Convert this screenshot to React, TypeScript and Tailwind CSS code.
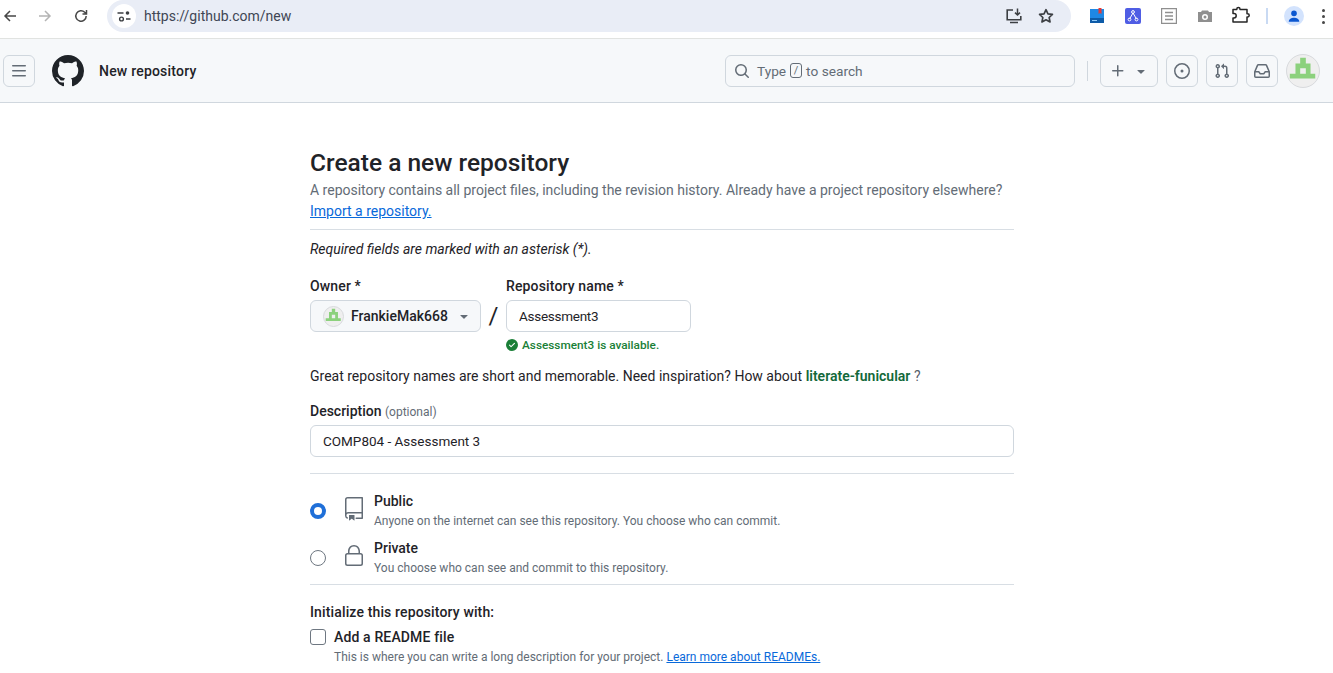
const octicons = {
  bars: "M1 2.75A.75.75 0 0 1 1.75 2h12.5a.75.75 0 0 1 0 1.5H1.75A.75.75 0 0 1 1 2.75Zm0 5A.75.75 0 0 1 1.75 7h12.5a.75.75 0 0 1 0 1.5H1.75A.75.75 0 0 1 1 7.75ZM1.75 12h12.5a.75.75 0 0 1 0 1.5H1.75a.75.75 0 0 1 0-1.5Z",
  github: "M8 0c4.42 0 8 3.58 8 8a8.013 8.013 0 0 1-5.45 7.59c-.4.08-.55-.17-.55-.38 0-.27.01-1.13.01-2.2 0-.75-.25-1.23-.54-1.48 1.78-.2 3.65-.88 3.65-3.95 0-.88-.31-1.59-.82-2.15.08-.2.36-1.02-.08-2.12 0 0-.67-.22-2.2.82-.64-.18-1.32-.27-2-.27-.68 0-1.36.09-2 .27-1.53-1.03-2.2-.82-2.2-.82-.44 1.1-.16 1.92-.08 2.12-.51.56-.82 1.28-.82 2.15 0 3.06 1.86 3.75 3.64 3.95-.23.2-.44.55-.51 1.07-.46.21-1.61.55-2.33-.66-.15-.24-.6-.83-1.23-.82-.67.01-.27.38.01.53.34.19.73.9.82 1.13.16.45.68 1.31 2.69.94 0 .67.01 1.3.01 1.49 0 .21-.15.45-.55.38A7.995 7.995 0 0 1 0 8c0-4.42 3.58-8 8-8Z",
  search: "M10.68 11.74a6 6 0 0 1-7.922-8.982 6 6 0 0 1 8.982 7.922l3.04 3.04a.749.749 0 0 1-.326 1.275.749.749 0 0 1-.734-.215ZM11.5 7a4.499 4.499 0 1 0-8.997 0A4.499 4.499 0 0 0 11.5 7Z",
  plus: "M7.75 2a.75.75 0 0 1 .75.75V7h4.25a.75.75 0 0 1 0 1.5H8.5v4.25a.75.75 0 0 1-1.5 0V8.5H2.75a.75.75 0 0 1 0-1.5H7V2.75A.75.75 0 0 1 7.75 2Z",
  caret: "m4.427 7.427 3.396 3.396a.25.25 0 0 0 .354 0l3.396-3.396A.25.25 0 0 0 11.396 7H4.604a.25.25 0 0 0-.177.427Z",
  issue: "M8 9.5a1.5 1.5 0 1 0 0-3 1.5 1.5 0 0 0 0 3ZM8 0a8 8 0 1 1 0 16A8 8 0 0 1 8 0ZM1.5 8a6.5 6.5 0 1 0 13 0 6.5 6.5 0 0 0-13 0Z",
  pull: "M1.5 3.25a2.25 2.25 0 1 1 3 2.122v5.256a2.251 2.251 0 1 1-1.5 0V5.372A2.25 2.25 0 0 1 1.5 3.25Zm5.677-.177L9.573.677A.25.25 0 0 1 10 .854V2.5h1A2.5 2.5 0 0 1 13.5 5v5.628a2.251 2.251 0 1 1-1.5 0V5a1 1 0 0 0-1-1h-1v1.646a.25.25 0 0 1-.427.177L7.177 3.427a.25.25 0 0 1 0-.354ZM3.75 2.5a.75.75 0 1 0 0 1.5.75.75 0 0 0 0-1.5Zm0 9.5a.75.75 0 1 0 0 1.5.75.75 0 0 0 0-1.5Zm8.25.75a.75.75 0 1 0 1.5 0 .75.75 0 0 0-1.5 0Z",
  inbox: "M2.8 2.06A1.75 1.75 0 0 1 4.41 1h7.18c.7 0 1.333.417 1.61 1.06l2.74 6.395c.04.093.06.194.06.295v4.5A1.75 1.75 0 0 1 14.25 15H1.75A1.75 1.75 0 0 1 0 13.25v-4.5c0-.101.02-.202.06-.295Zm1.61.44a.25.25 0 0 0-.23.152L1.887 8H4.75a.75.75 0 0 1 .6.3L6.625 10h2.75l1.275-1.7a.75.75 0 0 1 .6-.3h2.863L11.82 2.652a.25.25 0 0 0-.23-.152Zm10.09 7h-2.875l-1.275 1.7a.75.75 0 0 1-.6.3h-3.5a.75.75 0 0 1-.6-.3L4.375 9.5H1.5v3.75c0 .138.112.25.25.25h12.5a.25.25 0 0 0 .25-.25Z",
  check: "M8 16A8 8 0 1 1 8 0a8 8 0 0 1 0 16Zm3.78-9.72a.751.751 0 0 0-.018-1.042.751.751 0 0 0-1.042-.018L6.75 9.19 5.28 7.72a.751.751 0 0 0-1.042.018.751.751 0 0 0-.018 1.042l2 2a.75.75 0 0 0 1.06 0Z",
};

// these two come from the 24px octicon set, thinner strokes than the 16px ones
const repo24 = "M3 2.75A2.75 2.75 0 0 1 5.75 0h14.5a.75.75 0 0 1 .75.75v20.5a.75.75 0 0 1-.75.75h-6a.75.75 0 0 1 0-1.5h5.25v-4H6A1.5 1.5 0 0 0 4.5 18v.75c0 .716.43 1.334 1.05 1.605a.75.75 0 0 1-.6 1.374A3.251 3.251 0 0 1 3 18.75ZM19.5 1.5H5.75c-.69 0-1.25.56-1.25 1.25v12.651A2.989 2.989 0 0 1 6 15h13.5ZM7 18.25a.25.25 0 0 1 .25-.25h5a.25.25 0 0 1 .25.25v5.01a.25.25 0 0 1-.397.201l-2.206-1.604a.25.25 0 0 0-.294 0L7.397 23.46a.25.25 0 0 1-.397-.2Z";
const lock24 = "M6 9V7.25C6 3.845 8.503 1 12 1s6 2.845 6 6.25V9h.5a2.5 2.5 0 0 1 2.5 2.5v8a2.5 2.5 0 0 1-2.5 2.5h-13A2.5 2.5 0 0 1 3 19.5v-8A2.5 2.5 0 0 1 5.5 9Zm-1.5 2.5v8a1 1 0 0 0 1 1h13a1 1 0 0 0 1-1v-8a1 1 0 0 0-1-1h-13a1 1 0 0 0-1 1Zm3-4.25V9h9V7.25c0-2.67-1.922-4.75-4.5-4.75-2.578 0-4.5 2.08-4.5 4.75Z";

function Octicon({ d, className, box = 16 }: { d: string; className: string; box?: number }) {
  return (
    <svg viewBox={`0 0 ${box} ${box}`} fill="currentColor" className={className}>
      <path fillRule="evenodd" d={d} />
    </svg>
  );
}

function Identicon({ className }: { className: string }) {
  return (
    <span className={`flex items-center justify-center rounded-full bg-[#efefef] border border-[#d8dadd] overflow-hidden shrink-0 ${className}`}>
      <svg viewBox="0 0 34 34" className="w-full h-full">
        <path fill="#8cd17d" fillRule="evenodd" d="M14 3h6v6h5v11h5v5H3v-5h6V9h5Zm0 11v6h6v-6Z" />
      </svg>
    </span>
  );
}

function HeaderButton({ d }: { d: string }) {
  return (
    <button className="w-8 h-8 flex items-center justify-center rounded-md border border-[#d0d7de] text-[#636c76]">
      <Octicon d={d} className="w-4 h-4" />
    </button>
  );
}

function BrowserBar() {
  return (
    <div className="h-[39px] flex items-start bg-white border-b border-[#e1e3e1]">
      <div className="w-[107px] h-[32px] shrink-0 flex items-center text-[#474747]">
        <svg viewBox="0 0 16 16" className="w-4 h-4 ml-[2px]" fill="none" stroke="currentColor" strokeWidth="1.5">
          <path d="M14 8H3M8 3 3 8l5 5" />
        </svg>
        <svg viewBox="0 0 16 16" className="w-4 h-4 ml-[19px] text-[#b4b4b4]" fill="none" stroke="currentColor" strokeWidth="1.5">
          <path d="M2 8h11M8 3l5 5-5 5" />
        </svg>
        <svg viewBox="0 0 16 16" className="w-4 h-4 ml-[20px]" fill="none" stroke="currentColor" strokeWidth="1.5">
          <path d="M13.2 8a5.2 5.2 0 1 1-1.5-3.7L13.5 6M13.5 2v4h-4" />
        </svg>
      </div>
      <div className="w-[964px] h-[32px] shrink-0 flex items-center rounded-full bg-[#e9edf6] pl-[5px] pr-[16px]">
        <span className="w-6 h-6 rounded-full bg-white flex items-center justify-center text-[#3c3f43]">
          <svg viewBox="0 0 16 16" className="w-4 h-4" fill="none" stroke="currentColor" strokeWidth="1.4">
            <path d="M1.5 5h6M10 11h4.5" />
            <circle cx="11.5" cy="5" r="1.8" fill="currentColor" stroke="none" />
            <circle cx="5.5" cy="11" r="1.9" />
          </svg>
        </span>
        <span className="ml-[8px] text-[14px] text-[#3f4654]">https://github.com/new</span>
        <span className="ml-auto flex items-center text-[#3c3f43]">
          <svg viewBox="0 0 18 18" className="w-[18px] h-[18px]" fill="none" stroke="currentColor" strokeWidth="1.5">
            <path d="M8 3H2.2v9.8h13.6V9M5 15.5h8" strokeWidth="1.6" />
            <path d="M12.5 1.5v6.2M10 5.6l2.5 2.4L15 5.6" />
          </svg>
          <svg viewBox="0 0 24 24" className="w-[18px] h-[18px] ml-[14px]" fill="none" stroke="currentColor" strokeWidth="2.2" strokeLinejoin="round">
            <path d="m12 3.5 2.6 5.6 6 .7-4.4 4.2 1.2 6L12 17l-5.4 3 1.2-6-4.4-4.2 6-.7Z" />
          </svg>
        </span>
      </div>
      <div className="flex-1 h-[32px] flex items-center">
        <svg viewBox="0 0 16 16" className="w-4 h-4 ml-[18px]">
          <path fill="#1e88e5" d="M1 1h14v14H1z" />
          <path fill="#0d5ba8" d="M1 10h14v5H1z" />
          <path fill="#90caf9" d="M3 12h5v1H3z" />
          <path fill="#e53935" d="M9.5 0h3v6l-1.5-1-1.5 1z" />
        </svg>
        <span className="w-4 h-4 ml-[20px] rounded-[2px] bg-[#4f5de4] flex items-center justify-center">
          <svg viewBox="0 0 16 16" className="w-4 h-4" fill="none" stroke="#fff" strokeWidth="1">
            <path d="M8 5 4.5 11M8 5l3.5 6" />
            <circle cx="8" cy="4" r="1.4" />
            <circle cx="4.5" cy="11.5" r="1.4" />
            <circle cx="11.5" cy="11.5" r="1.4" />
          </svg>
        </span>
        <svg viewBox="0 0 16 16" className="w-4 h-4 ml-[20px]" fill="none" stroke="#8f8f8f" strokeWidth="1.2">
          <path d="M.6.6h14.8v14.8H.6z" />
          <path d="M4 4.5h8M4 8h8M4 11.5h8" strokeWidth="1.5" />
        </svg>
        <svg viewBox="0 0 16 16" className="w-4 h-4 ml-[20px]">
          <path fill="#8f8f8f" fillRule="evenodd" d="M5 2.5h6l1 1.5h3v10H1V4h3Zm3 3.5a3 3 0 1 0 0 6 3 3 0 0 0 0-6Zm0 1.5a1.5 1.5 0 1 1 0 3 1.5 1.5 0 0 1 0-3Z" />
        </svg>
        <svg viewBox="0 0 20 20" className="w-5 h-5 ml-[18px]" fill="none" stroke="#262626" strokeWidth="1.5" strokeLinejoin="round">
          <path d="M2 3.5h3.8V3a1.6 1.6 0 0 1 3.2 0v.5H16v4.2h.6a1.6 1.6 0 0 1 0 3.2H16V16H2v-4h1a2.2 2.2 0 0 0 0-4.4H2Z" />
        </svg>
        <span className="w-[2px] h-4 ml-[15px] bg-[#c9daf3]" />
        <span className="w-5 h-5 ml-[16px] rounded-full bg-[#d3e3fd] flex items-center justify-center overflow-hidden">
          <svg viewBox="0 0 16 16" className="w-3.5 h-3.5">
            <circle cx="8" cy="5" r="3.2" fill="#0b57d0" />
            <path fill="#0b57d0" d="M2 14.5c0-3 3-4.5 6-4.5s6 1.5 6 4.5z" />
          </svg>
        </span>
        <span className="ml-[18px] flex flex-col gap-[3px]">
          <span className="w-[3px] h-[3px] rounded-full bg-[#474747]" />
          <span className="w-[3px] h-[3px] rounded-full bg-[#474747]" />
          <span className="w-[3px] h-[3px] rounded-full bg-[#474747]" />
        </span>
      </div>
    </div>
  );
}

function AppHeader() {
  return (
    <header className="h-[64px] flex items-center bg-[#f6f8fa] border-b border-[#d0d7de] pl-[3px] pr-[13px]">
      <button className="w-8 h-8 flex items-center justify-center rounded-md border border-[#d0d7de] text-[#636c76]">
        <Octicon d={octicons.bars} className="w-4 h-4" />
      </button>
      <Octicon d={octicons.github} className="w-8 h-8 ml-[17px] text-[#1f2328]" />
      <span className="ml-[15px] mt-[2px] text-[14px] tracking-[0.015em] font-medium text-[#1f2328]">New repository</span>
      <div className="ml-auto w-[350px] h-8 flex items-center rounded-md border border-[#d0d7de] px-2 text-[13.7px] text-[#636c76]">
        <Octicon d={octicons.search} className="w-4 h-4 mr-[7px]" />
        <span className="mt-[2px]">Type</span>
        <span className="mx-[4px] w-3 h-[15px] flex items-center justify-center rounded-[3px] border border-[#636c76] text-[11px] leading-none">/</span>
        <span className="mt-[2px]">to search</span>
      </div>
      <span className="w-px h-5 ml-3 bg-[#d0d7de]" />
      <button className="ml-3 w-[58px] h-8 flex items-center justify-center gap-[7px] rounded-md border border-[#d0d7de] text-[#636c76]">
        <Octicon d={octicons.plus} className="w-4 h-4" />
        <Octicon d={octicons.caret} className="w-4 h-4" />
      </button>
      <div className="ml-2 flex items-center gap-2">
        <HeaderButton d={octicons.issue} />
        <HeaderButton d={octicons.pull} />
        <HeaderButton d={octicons.inbox} />
      </div>
      <Identicon className="ml-2 w-[34px] h-[34px]" />
    </header>
  );
}

function VisibilityOption({ icon, title, text, checked }: { icon: string; title: string; text: string; checked?: boolean }) {
  return (
    <div className="flex items-center h-[47px]">
      {checked ? (
        <span className="w-4 h-4 rounded-full border-[4px] border-[#1f6fd8] bg-white shrink-0" />
      ) : (
        <span className="w-4 h-4 rounded-full border border-[#6e7781] bg-white shrink-0" />
      )}
      <Octicon d={icon} box={24} className="w-6 h-6 -mt-[4px] ml-[16px] text-[#636c76] shrink-0" />
      <div className="ml-[8px] self-start mt-[4px]">
        <div className="text-[14px] leading-[20px] font-medium text-[#1f2328]">{title}</div>
        <div className="mt-[1px] text-[12px] leading-[18px] text-[#636c76]">{text}</div>
      </div>
    </div>
  );
}

export default function App() {
  return (
    <div className="h-[673px] overflow-hidden bg-white text-[#1f2328] font-['Roboto',sans-serif]">
      <BrowserBar />
      <AppHeader />
      <main className="w-[704px] ml-[310px] pt-[44px]">
        <h1 className="text-[24.5px] leading-[32px] font-medium">Create a new repository</h1>
        <p className="mt-[1px] text-[14px] leading-[21px] text-[#636c76]">
          A repository contains all project files, including the revision history. Already have a project repository elsewhere?{" "}
          <a className="text-[#0969da] underline">Import a repository.</a>
        </p>
        <div className="border-t border-[#d8dee4] mt-[7px]" />
        <p className="text-[14px] leading-[20px] italic mt-[9px]">Required fields are marked with an asterisk (*).</p>

        <div className="flex mt-[17px]">
          <div>
            <label className="block text-[14px] leading-[20px] tracking-[0.01em] font-medium">Owner *</label>
            <div className="mt-[4px] w-[171px] h-8 flex items-center rounded-md border border-[#d0d7de] bg-[#f6f8fa] pl-[12px]">
              <Identicon className="w-[21px] h-[21px]" />
              <span className="ml-[7px] text-[14px] font-medium">FrankieMak668</span>
              <Octicon d={octicons.caret} className="w-4 h-4 ml-[8px] text-[#636c76]" />
            </div>
          </div>
          <span className="w-[25px] mt-[20px] text-center text-[24px] leading-[40px] text-[#1f2328]">/</span>
          <div>
            <label className="block text-[14px] leading-[20px] tracking-[0.01em] font-medium">Repository name *</label>
            <input
              readOnly
              value="Assessment3"
              className="block mt-[4px] w-[185px] h-8 rounded-md border border-[#d0d7de] px-[12px] text-[13.5px] tracking-[-0.02em] text-[#1f2328]"
            />
            <div className="flex items-center mt-[5px] text-[11.8px] leading-[16px] font-medium text-[#1a7f37]">
              <Octicon d={octicons.check} className="w-3 h-3 mr-[4px]" />
              Assessment3 is available.
            </div>
          </div>
        </div>

        <p className="text-[14px] leading-[20px] mt-[13px]">
          Great repository names are short and memorable. Need inspiration? How about{" "}
          <a className="font-semibold text-[#13693a]">literate-funicular</a> <span className="text-[#57606a]">?</span>
        </p>

        <label className="block text-[14px] leading-[20px] font-medium mt-[15px]">
          Description <span className="text-[12px] font-normal text-[#636c76]">(optional)</span>
        </label>
        <input
          readOnly
          value="COMP804 - Assessment 3"
          className="block mt-[3px] w-full h-8 rounded-md border border-[#d0d7de] px-[12px] text-[13.5px] text-[#1f2328]"
        />
        <div className="border-t border-[#d8dee4] mt-[16px]" />

        <div className="mt-[13px]">
          <VisibilityOption checked icon={repo24} title="Public" text="Anyone on the internet can see this repository. You choose who can commit." />
          <VisibilityOption icon={lock24} title="Private" text="You choose who can see and commit to this repository." />
        </div>
        <div className="border-t border-[#d8dee4] mt-[3px]" />

        <p className="text-[14px] leading-[20px] tracking-[0.01em] font-medium mt-[17px]">Initialize this repository with:</p>
        <div className="flex items-center mt-[5px]">
          <span className="w-4 h-4 rounded-[3px] border border-[#6e7781] bg-white" />
          <span className="ml-2 text-[14px] leading-[20px] tracking-[0.01em] font-medium">Add a README file</span>
        </div>
        <p className="ml-6 mt-[1px] text-[12px] leading-[18px] text-[#636c76]">
          This is where you can write a long description for your project.{" "}
          <a className="text-[#0969da] underline">Learn more about READMEs.</a>
        </p>
      </main>
    </div>
  );
}
